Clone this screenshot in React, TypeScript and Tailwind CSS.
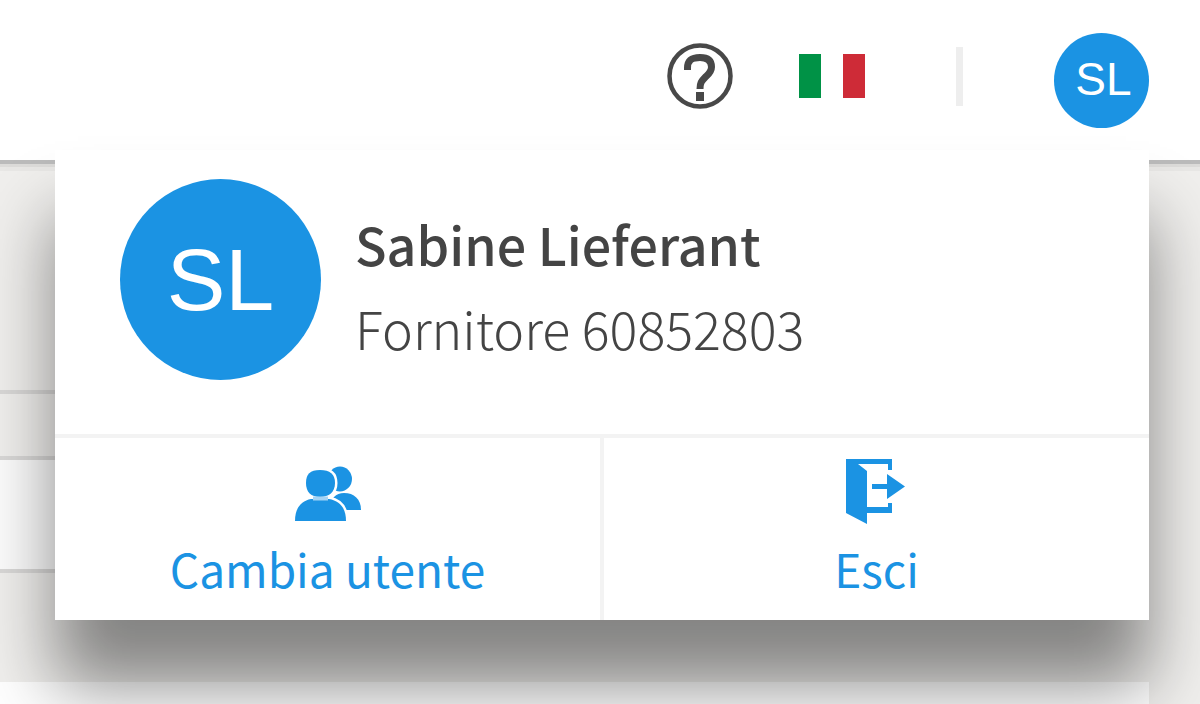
import React from 'react';

const user = { name: 'Sabine Lieferant', role: 'Fornitore 60852803', initials: 'SL' };

function HelpIcon() {
  return (
    <svg viewBox="0 0 66 66" className="h-[66px] w-[66px]" fill="none" stroke="#484848" aria-hidden="true">
      <circle cx="33" cy="33" r="30.5" strokeWidth="4.5" />
      <path d="M20.5 27V25C20.5 17 25 14.5 33 14.5C41 14.5 44.5 18 44.5 24C44.5 29 41.5 31 38 34.5C34.5 38 33 40 33 46" strokeWidth="7" />
      <path d="M33 49V58" strokeWidth="8" />
    </svg>
  );
}

function FlagIcon() {
  return (
    <svg viewBox="0 0 66 44" className="h-[44px] w-[66px]" aria-hidden="true">
      <path d="M0 0H22V44H0Z" fill="#009246" />
      <path d="M22 0H44V44H22Z" fill="#fff" />
      <path d="M44 0H66V44H44Z" fill="#ce2b37" />
    </svg>
  );
}

function SwitchUserIcon() {
  return (
    <svg viewBox="0 0 66 66" className="h-[66px] w-[66px]" fill="#1b93e3" aria-hidden="true">
      <ellipse cx="45" cy="20" rx="12" ry="12.5" />
      <path d="M35 51C35 39 41 34 49 34C59 34 66 40 66 51Z" />
      <g stroke="#fff" strokeWidth="5" paintOrder="stroke">
        <path d="M16 40H34C45 42 51 49 51 62H0C0 49 6 42 16 40Z" />
        <path d="M25 11C35 11 40 15 40 24C40 33 34 38 25 38C16 38 11 33 11 24C11 15 15 11 25 11Z" />
      </g>
      <path d="M18 39.5H33" stroke="#a3d3f5" strokeWidth="4" />
    </svg>
  );
}

function ExitIcon() {
  return (
    <svg viewBox="0 0 66 66" className="h-[66px] w-[66px]" fill="#1b93e3" aria-hidden="true">
      <path d="M2 0H48V11H44V5H14L23 12V65L2 54Z" />
      <path d="M23 48H44V44H48V54H23Z" />
      <path d="M28 25H43V15L61 27.5L43 40V30H28Z" />
    </svg>
  );
}

function Action({ label, children }: { label: string; children: React.ReactNode }) {
  return (
    <button type="button" className="flex flex-1 flex-col items-center pt-[21px] pb-[9px] text-[#1b93e3]">
      {children}
      <span className="text-[46px] leading-[86px]">{label}</span>
    </button>
  );
}

function UserMenu() {
  return (
    <div className="absolute top-[150px] right-[51px] left-[55px] bg-white shadow-[0_66px_66px_rgba(0,0,0,0.45)]">
      <div className="flex items-start gap-[34px] px-[65px] pt-[29px] pb-[54px]">
        <div className="flex h-[201px] w-[201px] shrink-0 items-center justify-center rounded-full bg-[#1b93e3] font-['Liberation_Sans',sans-serif] text-[88px] text-white">
          {user.initials}
        </div>
        <div className="pt-[23px] whitespace-nowrap text-[#444]">
          <p className="text-[52px] leading-[84px] font-medium">{user.name}</p>
          <p className="text-[52px] leading-[84px] font-light">{user.role}</p>
        </div>
      </div>
      <div className="flex divide-x-4 divide-[#f3f3f3] border-t-4 border-[#f3f3f3]">
        <Action label="Cambia utente">
          <SwitchUserIcon />
        </Action>
        <Action label="Esci">
          <ExitIcon />
        </Action>
      </div>
    </div>
  );
}

export default function App() {
  return (
    <div className="relative flex min-h-screen flex-col overflow-hidden bg-[#f0efed] font-['Noto_Sans_CJK_SC',sans-serif]">
      <header className="z-10 flex h-[160px] items-start justify-end bg-white pr-[51px] shadow-[0_4px_0_#bbb,0_7px_0_#dcdbd9,0_11px_0_#e8e7e5]">
        <button type="button" aria-label="Aiuto" className="mt-[43px] mr-[66px]">
          <HelpIcon />
        </button>
        <button type="button" aria-label="Italiano" className="mt-[54px] mr-[91px]">
          <FlagIcon />
        </button>
        <div className="mt-[47px] mr-[91px] h-[59px] w-[7px] bg-[#eee]" />
        <button
          type="button"
          className="mt-[33px] flex h-[95px] w-[95px] items-center justify-center rounded-full bg-[#1b93e3] pb-0.5 pl-1 font-['Liberation_Sans',sans-serif] text-[46px] text-white"
        >
          {user.initials}
        </button>
      </header>

      <main className="mr-[51px] flex flex-1 flex-col">
        <div className="h-[234px] border-b-4 border-[#d9d8d7]" />
        <div className="h-[66px] border-b-4 border-[#d9d8d7]" />
        <div className="h-[113px] border-b-4 border-[#d9d8d7] bg-[#fcfcfc]" />
        <div className="h-[109px]" />
        <div className="flex-1 bg-white" />
      </main>

      <div className="absolute inset-0 z-20">
        <UserMenu />
      </div>
    </div>
  );
}
